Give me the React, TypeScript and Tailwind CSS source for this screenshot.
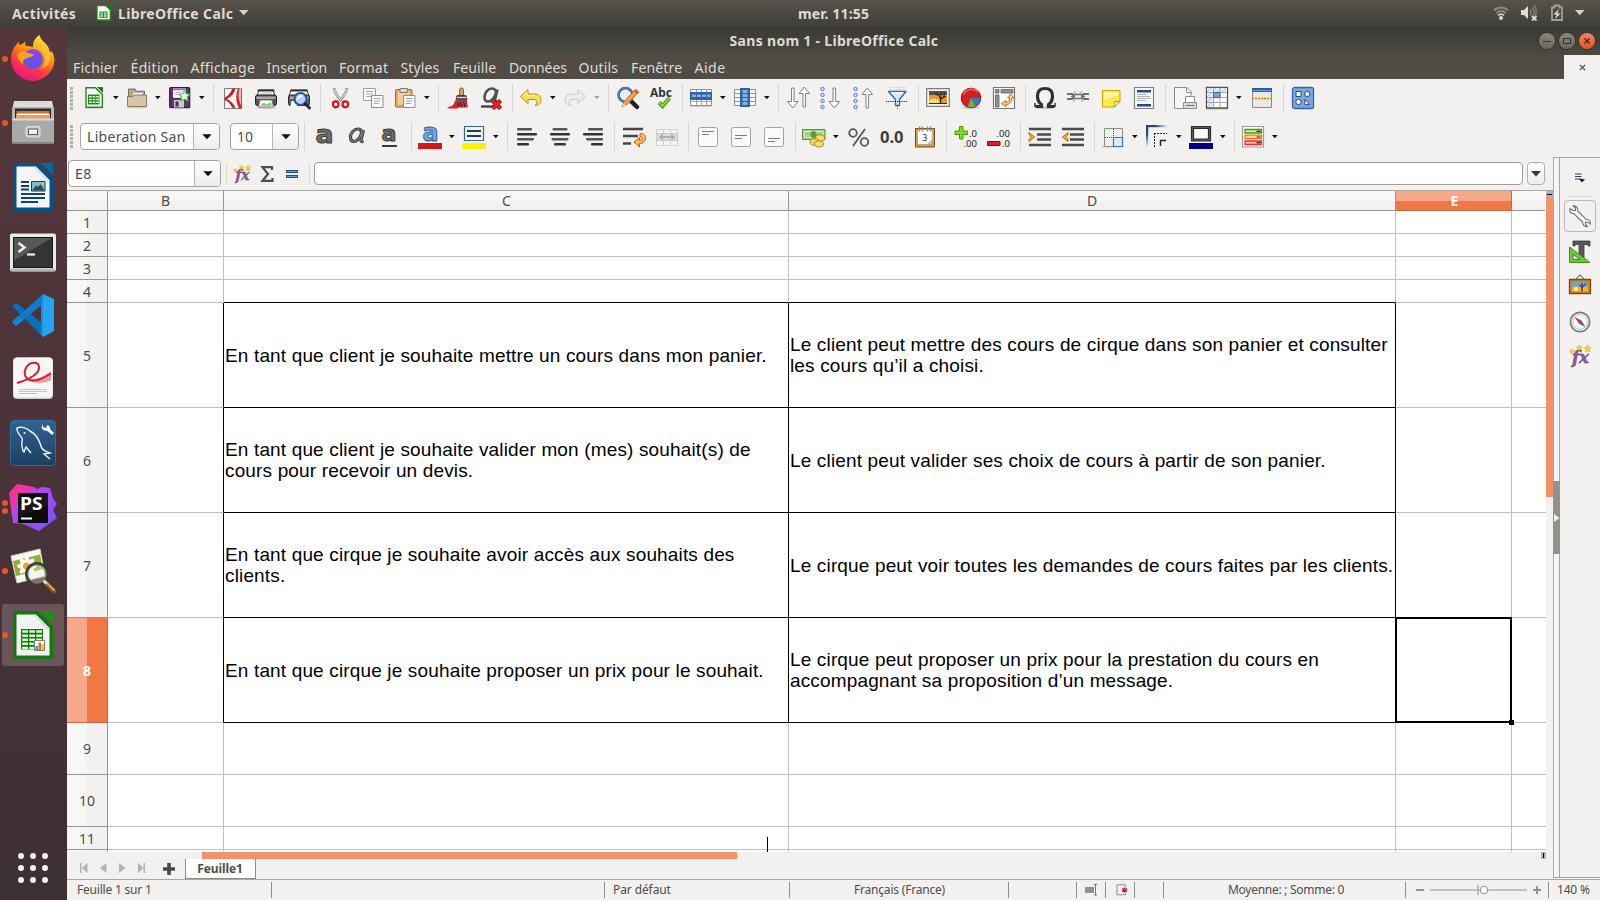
import type { ReactNode } from "react";

/* ---------- shared helpers ---------- */

function Svg({ children, size = 24 }: { children: ReactNode; size?: number }) {
  return (
    <svg width={size} height={size} viewBox={`0 0 ${size} ${size}`} fill="none" className="block shrink-0 overflow-visible">
      {children}
    </svg>
  );
}

function Caret({ color = "#111" }: { color?: string }) {
  return (
    <svg width="6" height="4" viewBox="0 0 6 4" className="block shrink-0">
      <path d="M0 0h5.6L2.8 3.2z" fill={color} />
    </svg>
  );
}

function Tool({ children }: { children: ReactNode }) {
  return <div className="flex w-[33px] shrink-0 pl-1">{children}</div>;
}

function DropTool({ children, faded = false, first = false }: { children: ReactNode; faded?: boolean; first?: boolean }) {
  return (
    <div className={`flex shrink-0 items-center pl-[3px] ${first ? "w-[42px]" : "w-[44px]"}`}>
      {children}
      <div className="pl-[7px]">
        <Caret color={faded ? "#a3a3a1" : "#111"} />
      </div>
    </div>
  );
}

function Sep() {
  return <div className="mr-[3px] ml-1 h-[29px] w-px shrink-0 bg-[#d8d6d3]" />;
}

function Grip() {
  return (
    <div className="ml-[3px] flex w-[3px] flex-col gap-px">
      {[0, 1, 2, 3, 4, 5].map((i) => (
        <div key={i} className="h-[3px] w-[3px] bg-[#b2b0ad]" />
      ))}
    </div>
  );
}

/* ---------- standard toolbar icons ---------- */

const NewDoc = () => (
  <Svg>
    <ellipse cx="12" cy="21.8" rx="9" ry="1.4" fill="#d4d3d1" />
    <path d="M4 1.7h9.5l6.8 6.8V21.3H4z" fill="#fff" stroke="#1b8a1b" strokeWidth="1.4" />
    <path d="M15 1h6v6z" fill="#128012" />
    <path d="M6 8.5h11.5v10H6z" fill="#1b8a1b" />
    <path d="M7 10h2.8v1.5H7zM10.6 10h2.8v1.5h-2.8zM14.2 10H17v1.5h-2.8zM7 12.7h2.8v1.5H7zM10.6 12.7h2.8v1.5h-2.8zM14.2 12.7H17v1.5h-2.8zM7 15.4h2.8v1.7H7zM10.6 15.4h2.8v1.7h-2.8zM14.2 15.4H17v1.7h-2.8z" fill="#d9f5d0" />
  </Svg>
);
const Folder = () => (
  <Svg>
    <ellipse cx="13" cy="21.2" rx="10" ry="1.3" fill="#cfcdca" />
    <path d="M4.5 14V3h6.5l1.5 2.2h8V14z" fill="#b7a583" stroke="#7d6c4c" />
    <path d="M9 6.5h10V14H9z" fill="#fafafa" stroke="#a9a9a9" strokeWidth=".8" />
    <path d="M3.500 20.500v-10H9l1.500-1.500h12v11.500z" fill="#d6c6a6" stroke="#8a7856" />
  </Svg>
);
const Save = () => (
  <Svg>
    <rect x="1.700" y="1.700" width="20" height="20" rx="1" fill="#5c3566" stroke="#361a40" strokeWidth="1.200" />
    <rect x="5" y="2.300" width="13" height="9.500" fill="#fbfbfb" />
    <path d="M5 2.300h13v2H5z" fill="#b65fd0" />
    <path d="M7 6.500h6M7 8.500h4" stroke="#c9a9d2" />
    <rect x="6" y="14" width="10" height="7.500" fill="#c9c9c7" />
    <rect x="7.500" y="15.500" width="3" height="5" fill="#4c2b56" />
    <path d="m16.500 4.500 1.700 3.300 3.600.6-2.600 2.600.6 3.700-3.300-1.700-3.300 1.700.6-3.700-2.600-2.600 3.600-.6z" fill="#eaffe5" stroke="#46c758" strokeWidth="1.100" />
  </Svg>
);
const Pdf = () => (
  <Svg>
    <path d="M3.500 2.500h17v20h-17z" fill="#f4f4f4" stroke="#7d7d7d" />
    <path d="M11.500 3h2.500C13 7.500 9.500 11 5 13c4 1.500 7.500 5 9 8.500h-2.500C9.500 17.500 7 15 4 13.800v-2C7.500 10 10.500 6.500 11.500 3z" fill="#c4161c" stroke="#c4161c" strokeWidth=".6" />
    <path d="M17 2.500h3.500v20h-2.500C14.500 16 14.500 8.500 17 2.500z" fill="#d9262b" />
    <path d="M18.500 2.500H20v17C17 13 17 7 18.500 2.500z" fill="#f6bcbc" />
  </Svg>
);
const Printer = () => (
  <Svg>
    <ellipse cx="12" cy="21.500" rx="10" ry="1.500" fill="#c9c8c5" />
    <path d="M5 4h14l2 6H3z" fill="#f7f7f7" stroke="#333" />
    <path d="M3.500 4.500h17" stroke="#2b2b2b" strokeWidth="1.800" />
    <rect x="1.500" y="9" width="21" height="10.500" rx="2" fill="#555753" stroke="#222" />
    <path d="M2.500 10.500h19v2.500h-19z" fill="#a9aba7" />
    <path d="M6 14h12l1.500 7h-15z" fill="#fff" stroke="#666" strokeWidth=".8" />
    <path d="M7 19c2-3 4-2 5-1s3-1 5-2l.6 3.700H6.500z" fill="#7fc76a" />
    <path d="M6.500 7h11" stroke="#bbb" />
  </Svg>
);
const Preview = () => (
  <Svg>
    <path d="M4 4h16l2 6H2z" fill="#f2f2f2" stroke="#444" />
    <path d="M3.500 4.500h17" stroke="#2b2b2b" strokeWidth="1.800" />
    <rect x="1.500" y="9" width="21" height="10.500" rx="2" fill="#60625e" stroke="#2b2b2b" />
    <path d="M3 10.500h5v2.500H3zM17 10.500h4.500v2.500H17z" fill="#a9aba7" />
    <path d="M4.500 15h5l1 6H3.500z" fill="#fff" />
    <circle cx="13.500" cy="13" r="6" fill="#b9d1ef" stroke="#2b54a8" strokeWidth="2.200" />
    <path d="M10.500 14a3.500 3.500 0 0 1 5-3.500" stroke="#fff" strokeWidth="1.500" />
    <path d="m18 17.500 4.500 4.500" stroke="#1c2b48" strokeWidth="3" strokeLinecap="round" />
  </Svg>
);
const Cut = () => (
  <Svg>
    <path d="M6 2c1 5 3.500 9 7.500 13M19 2c-1 5-3.500 9-7.500 13" stroke="#8b8d89" strokeWidth="2.600" />
    <path d="M6.300 3c1 4.500 3.500 8 6.500 11M18.700 3c-1 4.500-3.500 8-6.500 11" stroke="#f1f1f1" strokeWidth="1" />
    <ellipse cx="7.700" cy="18.300" rx="2.800" ry="3" stroke="#cc1420" strokeWidth="2.200" />
    <ellipse cx="17.300" cy="18.300" rx="2.800" ry="3" stroke="#cc1420" strokeWidth="2.200" />
  </Svg>
);
const Copy = () => (
  <Svg>
    <path d="M2.500 2.500h12v12h-12z" fill="#fbfbfb" stroke="#a0a09e" />
    <path d="M5 5.500h7M5 8h7M5 10.500h5" stroke="#a8a8a6" />
    <path d="M10.500 9.500h11.500v12H10.500z" fill="#fbfbfb" stroke="#8f8f8d" />
    <path d="M13 12.500h6.500M13 15h6.500M13 17.500h5" stroke="#a8a8a6" />
  </Svg>
);
const Paste = () => (
  <Svg>
    <rect x="2.500" y="3.500" width="16.500" height="17.500" rx="1" fill="#dfae62" stroke="#9b6a1c" />
    <path d="M5 5.500h11.500v13H5z" fill="#f0cf97" />
    <path d="M7 2.500h7.500v4H7z" fill="#d8d8d6" stroke="#7c7c7a" />
    <path d="M10.500 9.500h11.500v12H10.500z" fill="#fbfbfb" stroke="#8f8f8d" />
    <path d="M13 12.500h6.500M13 15h6.500M13 17.500h5" stroke="#9d9d9b" />
  </Svg>
);
const Brush = () => (
  <Svg>
    <path d="M13.500 3.500q0-1.500 2-1.500t2 1.500v6.500h-4z" fill="#dba25c" stroke="#8e5d1f" />
    <path d="M11 9.500h9l1 4h-11z" fill="#5d5f5c" stroke="#333" strokeWidth=".8" />
    <path d="M11 11.500h9.500" stroke="#d9d9d9" />
    <path d="M9.500 14h11.500l.8 7.500H6z" fill="#b53a44" />
    <path d="M1 21.500c4-.5 6.500-2.500 8.500-5l3 6H3z" fill="#df1e25" />
    <path d="M14 15.500l2 6M17.500 15l1.500 6M12 16l1 5" stroke="#542027" strokeWidth="1.200" />
  </Svg>
);
const ClearFmt = () => (
  <Svg>
    <path d="M18.500 3.500 16 14M17 7c0-3.500-2-4.500-4-4.500-4 0-7.500 4-7.500 8.500 0 3 1.500 4.500 3.500 4.500 3.500 0 6.500-4 8-8.500M16 14c0 1.500 1 2 2.500 1" stroke="#4f524f" strokeWidth="2.600" />
    <path d="M2 20.500h12" stroke="#444" strokeWidth="2.400" />
    <path d="m13.500 14.500 8 8m0-8-8 8" stroke="#8f0a10" strokeWidth="4.400" />
    <path d="m13.500 14.500 8 8m0-8-8 8" stroke="#f02028" strokeWidth="2.600" />
  </Svg>
);
const Undo = () => (
  <Svg>
    <path d="M1.500 10.500 9 3.500V8h6.500c4.500 0 6.500 2.500 6.500 6s-2.500 5.500-6 5.500c2.500-1.500 2.800-6-1-6H9v4z" fill="#f6df58" stroke="#b99407" strokeLinejoin="round" />
    <path d="M3.500 10.500 8 6.300V9.500h8" stroke="#fff7bb" />
  </Svg>
);
const Redo = () => (
  <Svg>
    <path d="M22.500 10.500 15 3.500V8H8.500C4 8 2 10.500 2 14s2.500 5.500 6 5.500c-2.500-1.500-2.800-6 1-6h6v4z" fill="#ececea" stroke="#c9c9c7" strokeLinejoin="round" />
  </Svg>
);
const Find = () => (
  <Svg>
    <path d="m15 15 6 6" stroke="#222" strokeWidth="4.500" strokeLinecap="round" />
    <circle cx="9.500" cy="9" r="7" fill="#e6eefa" stroke="#2f55a4" strokeWidth="2.600" />
    <circle cx="9.500" cy="9" r="7.200" stroke="#7b9bd6" strokeWidth=".8" />
    <path d="m6 21 2-5.500L19.500 3.500l3 2.800L11 18.500z" fill="#f3a04a" stroke="#b1621a" strokeWidth=".9" />
    <path d="m18 5 1.700-2 3.200 3-1.900 2z" fill="#e34a48" />
    <path d="m6 21 1.200-3.500 2.500 2z" fill="#f7e3c2" />
  </Svg>
);
const Spell = () => (
  <Svg>
    <text x="1" y="10.500" fontFamily="Noto Sans, sans-serif" fontWeight="700" fontSize="11.500" textLength="22" lengthAdjust="spacingAndGlyphs" fill="#33373a">Abc</text>
    <path d="m10 16.500 3.500 3.500L20.500 12" stroke="#3f8f0d" strokeWidth="4" />
    <path d="m10 16.500 3.500 3.500L20.500 12" stroke="#83d943" strokeWidth="2" />
  </Svg>
);
const RowIcon = () => (
  <Svg>
    <path d="M1.500 3.500h21v16h-21z" fill="#fff" stroke="#8f918e" />
    <path d="M2 15.500h20M7.500 4v15M12.500 4v15M17.500 4v15" stroke="#a5a7a4" />
    <rect x="1" y="6" width="22" height="8" fill="#2d63a8" />
    <path d="M3 8.500h4v2.500H3zM8 8.500h4v2.500H8zM13 8.500h4v2.500h-4zM18 8.500h3.500v2.500H18z" fill="#8bb0df" />
    <path d="M1 20.500h22" stroke="#cfcdca" />
  </Svg>
);
const ColIcon = () => (
  <Svg>
    <path d="M1.500 3.500h21v16h-21z" fill="#fff" stroke="#8f918e" />
    <path d="M2 7.500h20M2 11.500h20M2 15.500h20" stroke="#8f918e" />
    <rect x="7" y="2" width="10" height="19" fill="#2d63a8" />
    <path d="M9.500 4h5v3h-5zM9.500 8h5v3h-5zM9.500 12h5v3h-5zM9.500 16h5v3h-5z" fill="#8bb0df" />
  </Svg>
);
const downArrow = "M0 0h2.600v13.500h4L1.300 20l-5.300-6.500h4z";
const upArrow = "M0 20h2.600V6.500h4L1.300 0l-5.300 6.500h4z";
const Sort = () => (
  <Svg>
    <path d={downArrow} transform="translate(5.500 2)" fill="#fafafa" stroke="#80827f" />
    <path d={upArrow} transform="translate(17 1)" fill="#fafafa" stroke="#80827f" />
  </Svg>
);
const Dots = () => (
  <>
    {[3, 9, 15, 21].map((y) => (
      <circle key={y} cx="3.500" cy={y} r="1.700" fill="#dbe7f7" stroke="#4a7bbd" />
    ))}
  </>
);
const SortAsc = () => (
  <Svg>
    <Dots />
    <path d={downArrow} transform="translate(14 2)" fill="#fafafa" stroke="#80827f" />
  </Svg>
);
const SortDesc = () => (
  <Svg>
    <Dots />
    <path d={upArrow} transform="translate(14 2)" fill="#fafafa" stroke="#80827f" />
  </Svg>
);
const Filter = () => (
  <Svg>
    <path d="M5 1.500h15M5 3.500h15" stroke="#c9c8c6" strokeDasharray="1 1" />
    <path d="M3.500 5.500h17.500l-6.500 8v6h-4v-6z" fill="#d7e6f8" stroke="#3268ad" strokeWidth="1.300" strokeLinejoin="round" />
    <path d="M6 6.800h12" stroke="#fff" strokeWidth="1.500" />
    <path d="M1 15.500h22" stroke="#222" strokeDasharray="1.200 1" />
    <path d="M12.500 20v3" stroke="#3268ad" strokeDasharray="1 1" />
  </Svg>
);
const Picture = () => (
  <Svg>
    <path d="M.7 2.700h22.600v17.600H.7z" fill="#f6f6f4" stroke="#7c7e7a" strokeWidth="1.200" />
    <path d="M3 5h18v13H3z" fill="#57504a" />
    <path d="M3 9h18v9H3z" fill="#e79a28" />
    <ellipse cx="8" cy="15.500" rx="5" ry="2.800" fill="#fbe07b" />
    <path d="M14.500 17.500c.8-3 .6-5-2-8.500m2.800 4c2-1 3-3 3.200-6M15 13c-.3-3 0-5 .5-6.500m-6 1 3 2m5.300 1.500 2.200-.5" stroke="#2a1d10" strokeWidth="1.100" />
    <path d="M3 17h18v1H3z" fill="#33240f" />
  </Svg>
);
const Pie = () => (
  <Svg>
    <ellipse cx="12" cy="21.500" rx="9" ry="1.500" fill="#cbcac7" />
    <circle cx="12" cy="12" r="9.800" fill="#d61f26" stroke="#a80f15" />
    <path d="M12 12h9.500a9.500 9.500 0 0 1-5 8z" fill="#3e74bd" />
    <path d="m12 12 4.500 8.300a9.500 9.500 0 0 1-7.800.5z" fill="#63bb3c" />
    <path d="M4.500 8.500A9 9 0 0 1 19 6" stroke="#f0656a" strokeWidth="1.500" />
  </Svg>
);
const Pivot = () => (
  <Svg>
    <path d="M1.500 1.500h21v21h-21z" fill="#fff" stroke="#777975" strokeWidth="1.200" />
    <path d="M3.500 3.500H7V7H3.500zM9 3.500h12V7H9zM3.500 9H7v12H3.500z" fill="#8f918d" stroke="#5f615d" strokeWidth=".8" />
    <path d="m18.700 8 3 4h-2c.2 4-1.700 6.300-5.700 6.500v2.300L9.500 17.500l4.500-3v2c2.500 0 3.700-1.500 3.700-4.500h-2z" fill="#fbd9a9" stroke="#d2680a" strokeLinejoin="round" />
  </Svg>
);
const Omega = () => (
  <Svg>
    <ellipse cx="12" cy="21.800" rx="10" ry="1.400" fill="#c7c6c3" />
    <path d="M2.500 20.500h6v-2C5.500 16.500 4.500 13 4.500 10c0-5 3-7.500 7.500-7.500s7.500 2.500 7.500 7.500c0 3-1 6.500-4 8.500v2h6" stroke="#2c3133" strokeWidth="3.200" />
    <path d="M2 21v-4M22 21v-4" stroke="#2c3133" strokeWidth="1.500" />
  </Svg>
);
const Link = () => (
  <Svg>
    <path d="M1 8h5c2 0 2 5 0 5H1M23 8h-5c-2 0-2 5 0 5h5" stroke="#6d6f6b" strokeWidth="1.800" />
    <path d="M9 8.500h6c2 0 2 4 0 4H9c-2 0-2-4 0-4zM5 10.500h4M15 10.500h4" stroke="#6d6f6b" strokeWidth="1.400" />
    <path d="m8 5.500 2.500 2M16 5.500l-2.500 2M7 16l2-2M17 16l-2-2" stroke="#8b8d89" />
  </Svg>
);
const Note = () => (
  <Svg>
    <path d="M3.500 4.500h17.500v11l-5.500 5.500h-12z" fill="#fbe94e" stroke="#c9a400" />
    <path d="M5 6h14.500v3L5 14z" fill="#fdf59b" />
    <path d="M21 15.500h-5.500V21z" fill="#fff6ae" stroke="#c9a400" strokeLinejoin="round" />
  </Svg>
);
const HeaderFooter = () => (
  <Svg>
    <path d="M2.500 1.500h19v21h-19z" fill="#fbfbfb" stroke="#7f817e" strokeWidth="1.200" />
    <path d="M5 4h14v2.500H5zM5 18h14v2.500H5z" fill="#204a87" />
    <path d="M5 8.500h9M5 10.500h13M5 12.500h14M5 14.500h9" stroke="#b0b0ae" />
  </Svg>
);
const PrintArea = () => (
  <Svg>
    <path d="M1.500 1.500H14l4 4v17H1.500z" fill="#f6f6f5" stroke="#8c8e8a" />
    <path d="M13.500 1.500v5h5" stroke="#8c8e8a" />
    <path d="M12.500 10.500h9v6h-9z" fill="#fff" stroke="#8c8e8a" />
    <path d="M10.500 16.500h13v6h-13z" fill="#d9d9d7" stroke="#8c8e8a" />
    <path d="M13 19.500h8" stroke="#777" />
  </Svg>
);
const Freeze = () => (
  <Svg>
    <path d="M1 22.800h22" stroke="#bdbcb9" strokeWidth="1.500" />
    <path d="M1.500 1.500h21v20.500h-21z" fill="#fff" stroke="#555753" strokeWidth="1.300" />
    <path d="M2 2h20v4H2zM2 6h6v15H2z" fill="#e4edf8" />
    <path d="m2 6 4-4m1 4 4-4m1 4 4-4m1 4 4-4M2 11l5-5M2 16l5-5M2 21l5-5" stroke="#9fb9da" strokeWidth=".9" />
    <path d="M2 6.500h20M8.500 2v19M15 2v19M2 11.500h20M2 16.500h20" stroke="#a9aba7" />
    <path d="M8.500 6.500h6.500v5H8.500z" fill="#7ba4d9" stroke="#38689f" />
  </Svg>
);
const Split = () => (
  <Svg>
    <path d="M2.500 5.500h19v16h-19z" fill="#e8e8e5" stroke="#888a86" />
    <path d="M2 2h20v4H2z" fill="#2b5ea6" />
    <path d="M3 4.500h18" stroke="#6f9ad4" />
    <path d="M2 12.500h20" stroke="#f57900" strokeWidth="1.500" strokeDasharray="2 1" />
  </Svg>
);
const Shapes = () => (
  <Svg>
    <rect x="1.500" y="1.500" width="21" height="21" rx="2" fill="#7fa7db" stroke="#3465a4" strokeWidth="1.300" />
    <path d="M5 5.500h5v5H5zM13.700 13.500v5.200h5.200z" fill="#fff" stroke="#204a87" />
    <circle cx="16.300" cy="8" r="2.700" fill="#dce9f8" stroke="#204a87" />
    <circle cx="7.500" cy="16" r="2.700" fill="#fff" stroke="#204a87" />
  </Svg>
);

/* ---------- formatting toolbar icons ---------- */

const Letter = ({ italic = false, underline = false }: { italic?: boolean; underline?: boolean }) => (
  <Svg>
    {italic ? (
      <>
        <path d="M18.500 5 16 15M16.500 8c0-3-1.500-4-3.500-4-4 0-7.500 4-7.500 8 0 3 1.200 4.500 3.200 4.500 3.300 0 6.300-4 7.800-8M16 15c0 1.500 1 2 2.500 1" stroke="#3c3e3b" strokeWidth="3.200" />
        <path d="M18.500 5 16 15M16.500 8c0-3-1.500-4-3.500-4-4 0-7.500 4-7.500 8 0 3 1.200 4.500 3.200 4.500 3.300 0 6.300-4 7.800-8M16 15c0 1.500 1 2 2.500 1" stroke="#7f827e" strokeWidth="1.200" />
      </>
    ) : (
      <text x={3.500} y={underline ? 16 : 18} fontFamily="DejaVu Sans, sans-serif" fontWeight="700" fontSize={underline ? 22 : 25} textLength={underline ? 15 : 18} lengthAdjust="spacingAndGlyphs" fill="#6c6e6a" stroke="#3c3e3b" strokeWidth="1">
        a
      </text>
    )}
    {underline && <path d="M4 21h15" stroke="#3c3e3b" strokeWidth="2" />}
  </Svg>
);
const FontColor = () => (
  <Svg>
    <text x="4.500" y="15.500" fontFamily="DejaVu Sans, sans-serif" fontWeight="700" fontSize="24" textLength="16" lengthAdjust="spacingAndGlyphs" fill="#7fa6dc" stroke="#2b5ea6" strokeWidth="1">
      a
    </text>
    <path d="M0 18h24v6H0z" fill="#cc1a1f" />
  </Svg>
);
const Highlight = () => (
  <Svg>
    <path d="M2.500 1.500h19v14h-19z" fill="#eef4fb" stroke="#3465a4" strokeWidth="1.200" />
    <path d="M5 6h14M5 11h14" stroke="#34383a" strokeWidth="2" />
    <path d="M0 18h24v6H0z" fill="#fff200" />
  </Svg>
);
const Align = ({ mode }: { mode: "l" | "c" | "r" }) => {
  const widths = [15, 20, 17, 12];
  return (
    <Svg>
      {widths.map((w, i) => {
        const x = mode === "l" ? 2 : mode === "c" ? 12 - w / 2 : 22 - w;
        return <rect key={i} x={x} y={3 + i * 5} width={w} height="2.600" rx="1" fill={i % 2 ? "#2f3331" : "#555753"} />;
      })}
    </Svg>
  );
};
const Wrap = () => (
  <Svg>
    <path d="M1 4h20M1 11h15M1 18.500h8" stroke="#444745" strokeWidth="2.400" />
    <path d="M18 8.500c5 0 6.500 3 5 6.500-1 2.500-3 3.500-5.500 3.500V22L12 17l5.500-4.500v3c3 0 4-3.500.5-4z" fill="#f9b767" stroke="#ce5c00" strokeLinejoin="round" />
  </Svg>
);
const Merge = () => (
  <Svg>
    <path d="M1.500 4.500h21v16h-21z" fill="#f5f5f4" stroke="#d2d1cf" />
    <path d="M8.500 4v17M15.500 4v17" stroke="#d2d1cf" />
    <path d="M1.500 8.500h21v7h-21z" fill="#dcdcda" stroke="#c9c8c6" />
    <path d="M5 12h14M8 9.500 5 12l3 2.500M16 9.500l3 2.500-3 2.500" stroke="#a7a7a5" strokeWidth="1.300" />
  </Svg>
);
const VAlign = ({ y }: { y: number }) => (
  <Svg>
    <rect x="2.500" y="2.500" width="19" height="19" rx="2" fill="#fafafa" stroke="#a3a4a1" />
    <path d={`M6 ${y}h12M6 ${y + 3}h7`} stroke="#7b7d79" />
  </Svg>
);
const Currency = () => (
  <Svg>
    <path d="M.5 4.500h22.500v10H.5z" fill="#a3cf86" stroke="#5c8d41" />
    <path d="M2.500 6.500h18.500v6H2.500z" stroke="#d9efc9" />
    <ellipse cx="11.500" cy="9.500" rx="3" ry="3.500" fill="#5f9b45" />
    <ellipse cx="18" cy="13" rx="4.500" ry="3.300" fill="#f2dd75" stroke="#a98a1a" />
    <ellipse cx="12.500" cy="17" rx="4.500" ry="3.300" fill="#efd464" stroke="#a98a1a" />
    <ellipse cx="17" cy="19" rx="4.500" ry="3" fill="#f2dd75" stroke="#a98a1a" />
  </Svg>
);
const Percent = () => (
  <Svg>
    <circle cx="6" cy="8" r="3.800" stroke="#54575a" strokeWidth="1.800" />
    <circle cx="17.500" cy="17" r="3.800" stroke="#54575a" strokeWidth="1.800" />
    <path d="M18 4 6 21" stroke="#54575a" strokeWidth="1.800" />
  </Svg>
);
const NumberIcon = () => (
  <Svg>
    <text x="0" y="17.500" fontFamily="Noto Sans, sans-serif" fontWeight="700" fontSize="15.500" textLength="23.500" lengthAdjust="spacingAndGlyphs" fill="#3a3e3c">0.0</text>
  </Svg>
);
const DateIcon = () => (
  <Svg>
    <path d="M2.500 3.500h19v18.500h-19z" fill="#d19a3a" stroke="#7d4f05" />
    <path d="M4.500 4.500h15v15h-15z" fill="#fafafa" stroke="#9c9c9a" strokeWidth=".7" />
    <path d="M6.500 1.500v5M9.500 1.500v5M14.500 1.500v5M17.500 1.500v5" stroke="#8a8c88" strokeWidth="1.400" />
    <text x="9" y="16" fontFamily="DejaVu Sans, sans-serif" fontSize="8.500" fill="#333">3</text>
    <path d="m15 19 4-4v4z" fill="#d5d5d3" stroke="#999" strokeWidth=".6" />
  </Svg>
);
const AddDec = () => (
  <Svg>
    <path d="M5.500 1.500h3.500V6h4.500v3.500H9V14H5.500V9.500H1V6h4.500z" fill="#7bdc1e" stroke="#4e9a06" strokeLinejoin="round" />
    <text x="15" y="12" fontFamily="Noto Sans, sans-serif" fontSize="9.500" fill="#222">.0</text>
    <text x="9.500" y="22" fontFamily="Noto Sans, sans-serif" fontSize="9.500" fill="#222">.00</text>
  </Svg>
);
const DelDec = () => (
  <Svg>
    <path d="M.5 16.500h12.500v4H.5z" fill="#e01b24" stroke="#a40000" strokeLinejoin="round" />
    <text x="9.500" y="12" fontFamily="Noto Sans, sans-serif" fontSize="9.500" fill="#222">.00</text>
    <text x="15" y="22" fontFamily="Noto Sans, sans-serif" fontSize="9.500" fill="#222">.0</text>
  </Svg>
);
const Indent = ({ back = false }: { back?: boolean }) => (
  <Svg>
    <path d="M1 4h22M9 9.500h14M9 14.500h14M1 20h22" stroke="#484b49" strokeWidth="2.400" />
    <path d={back ? "M7 7.500v2L4.500 12 7 14.500v2L1.500 12z" : "M1 7.500v2L3.500 12 1 14.500v2L6.500 12z"} fill="#fcaf3e" stroke="#ce5c00" />
  </Svg>
);
const Borders = () => (
  <Svg>
    <path d="M1 21.500h22" stroke="#c5c4c1" strokeWidth="1.800" />
    <path d="M3.500 3.500h18v18h-18z" fill="#eceeeb" stroke="#8c8e8a" />
    <path d="M12.500 4v8M4 12.500h8" stroke="#555" strokeDasharray="1 1" />
    <path d="M12.500 12.500h9v9h-9z" fill="#e1ecf8" stroke="#3e74b5" strokeWidth="1.200" />
  </Svg>
);
const BorderStyle = () => (
  <Svg>
    <defs>
      <linearGradient id="bsx" x1="0" y1="0" x2="1" y2="0"><stop offset=".4" stopColor="#27486f" /><stop offset="1" stopColor="#27486f" stopOpacity="0" /></linearGradient>
      <linearGradient id="bsy" x1="0" y1="0" x2="0" y2="1"><stop offset=".4" stopColor="#27486f" /><stop offset="1" stopColor="#27486f" stopOpacity="0" /></linearGradient>
    </defs>
    <path d="M1 0h22v2.200H1z" fill="url(#bsx)" />
    <path d="M1 0h2.200v22H1z" fill="url(#bsy)" />
    <path d="M9 8.500h13M9.500 8v14" stroke="#222" strokeDasharray="2 1" />
    <path d="M15 15.500h6M15.500 15v6" stroke="#222" strokeWidth="1.400" />
  </Svg>
);
const BorderColor = () => (
  <Svg>
    <path d="M3.500 2.500h17v12.500h-17z" fill="#fafafa" stroke="#2b2e2f" strokeWidth="3.200" />
    <path d="M3.500 2.500h17v12.500h-17z" stroke="#686b69" strokeWidth=".8" />
    <path d="M0 18h24v6H0z" fill="#000080" />
  </Svg>
);
const CondFmt = () => (
  <Svg>
    <path d="M1.500 1.500h21v20.500h-21z" fill="#fdfdfd" stroke="#9b9c99" strokeWidth="1.200" />
    <path d="M4 4.500h16.500v3.500H4z" fill="#cbeeb4" stroke="#4e9a06" strokeWidth="1.300" />
    <path d="M4 10.200h16.500v3.500H4z" fill="#fcdcab" stroke="#f57900" strokeWidth="1.300" />
    <path d="M4 16h16.500v3.500H4z" fill="#f9b9b9" stroke="#ef2929" strokeWidth="1.300" />
    <path d="M15.500 6.300h4M15.500 12h4M15.500 17.700h4" stroke="#222" strokeWidth="1.200" />
  </Svg>
);
const FxIcon = ({ size = 18 }: { size?: number }) => (
  <svg width={size} height={size} viewBox="0 0 22 22" fill="none" className="block shrink-0 overflow-visible">
    <text x="3" y="18" fontFamily="DejaVu Serif, serif" fontStyle="italic" fontWeight="700" fontSize="17" textLength="17" lengthAdjust="spacingAndGlyphs" fill="#8e5a97" stroke="#5c3566" strokeWidth=".4">fx</text>
    <path d="m18.500 0 1.200 2.300 2.300.5-1.700 1.700.4 2.500-2.200-1.200L16.300 7l.4-2.500L15 2.800l2.300-.5zM10.500 0l1 1.800 2 .3-1.500 1.400.4 2-1.900-1-1.900 1 .4-2L7.500 2.100l2-.3zM3 4l.8 1.500 1.700.2-1.200 1.200.3 1.700L3 7.800l-1.600.8.300-1.700L.5 5.700l1.700-.2z" fill="#f6d32d" stroke="#c4a000" strokeWidth=".4" />
  </svg>
);

/* ---------- dock icons ---------- */

const Firefox = () => (
  <Svg size={48}>
    <defs>
      <linearGradient id="ff1" x1=".8" y1="0" x2=".3" y2="1"><stop offset="0" stopColor="#fff44f" /><stop offset=".4" stopColor="#ff980e" /><stop offset=".7" stopColor="#ff3647" /><stop offset="1" stopColor="#e31587" /></linearGradient>
      <linearGradient id="ff2" x1=".7" y1="0" x2=".3" y2="1"><stop offset="0" stopColor="#9a3df0" /><stop offset="1" stopColor="#4a5be8" /></linearGradient>
    </defs>
    <path d="M2 24C2 18 4 13 8 9l1.500-2.500c.3 1.500.5 2.500 1.500 3.500 2-1 3-1.500 5.500-3.500-.5 2-.3 3 .5 4.500 3 0 5 .5 7 1-.5-5 2.500-9.500 6.500-12 1 4 3.500 6 6.500 9 3 3 3.500 6 4 8.500l1.500-1.500c2 3 3 6.500 3 9.500a22.500 22 0 0 1-22.500 20.500A22 22 0 0 1 2 24z" fill="url(#ff1)" />
    <circle cx="24" cy="24" r="10" fill="url(#ff2)" />
    <path d="M8 20c2-3 6-3.500 9-2.500 3 .5 5 1.500 8 2-1.500 2.500-5 3-7 3.500-3 1-5 3-4 6-3-1-5-5-6-9z" fill="#ffa41c" />
    <path d="M24 13c5-1 10 1.500 12 7 1 6-1 11-5 14 8-2 11-8 10-15-1-6-7-8-17-6z" fill="#ffca2e" opacity=".8" />
  </Svg>
);
const Files = () => (
  <Svg size={48}>
    <path d="M5 2h38l2 10H3z" fill="#dcdcda" />
    <path d="M3 8h42v14H3z" fill="#b7b7b5" />
    <path d="M6 9.500h36V22H6z" fill="#2d2d2b" />
    <path d="M7.500 12h33v6h-33z" fill="#e0682a" />
    <path d="M7 15h34v7H7z" fill="#f0a050" />
    <path d="M8 14.500h32v1.500H8z" fill="#fff" />
    <path d="M3 19.500h42V45H3z" fill="#a9a9a7" />
    <path d="M3 19.500h42v2H3z" fill="#d8d8d6" />
    <path d="M3 43h42v2H3z" fill="#858583" />
    <rect x="17" y="27.500" width="14" height="10.500" rx="2" fill="#c9c9c7" stroke="#e2e2e0" />
    <rect x="19.500" y="30" width="9" height="5.500" fill="#f4f4f2" stroke="#5b5b59" />
  </Svg>
);
const Writer = () => (
  <Svg size={48}>
    <path d="M6 0h23l15 15v31q0 2-2 2H6q-2 0-2-2V2q0-2 2-2z" fill="#04528b" />
    <path d="M32 0h12v12z" fill="#0369a3" />
    <path d="M7.500 3.500H27L40.500 17v27.500h-33z" fill="#f5f5f5" />
    <path d="m25.500 3.500 15 15-1 1-15.500-16z" fill="#cfd8de" />
    <path d="M12 19h8M12 23h8M12 26.500h8M12 31h24M12 35h24M12 39h17" stroke="#06466f" strokeWidth="2" />
    <path d="M22.500 18.500H36v9.500H22.500z" fill="#7db9e0" stroke="#06466f" />
    <path d="m23 27.500 4-5 2 1.500 2.500-3 4 6.500z" fill="#39474c" /><circle cx="33.800" cy="20.500" r="1.300" fill="#f4d03c" />
  </Svg>
);
const Terminal = () => (
  <Svg size={48}>
    <rect x="1" y="6.500" width="46" height="38" rx="2" fill="#e9e9e7" />
    <path d="M2 41.500h44V44H2z" fill="#b5b5b3" />
    <rect x="4.500" y="10.500" width="39" height="30" fill="#333532" stroke="#181818" />
    <path d="M5 11h38L5 33.500z" fill="#555854" />
    <path d="m9.500 16 6 4.500-6 4.500" stroke="#eee" strokeWidth="2.500" />
    <path d="M18 27.500h8" stroke="#eee" strokeWidth="2.200" />
  </Svg>
);
const VsCode = () => (
  <Svg size={48}>
    <path d="m3 15 4-3.500 26 20.500v13z" fill="#0a6fb8" />
    <path d="m3 31 4 4L34 13V3z" fill="#0d7cc9" />
    <path d="m3 31 4 4 7-5.500-5-4.500z" fill="#0f86d8" />
    <path d="M34 3 45 8v32l-11 6-1-1z" fill="#24a5f2" />
    <path d="M34 3v42l-2-1V13z" fill="#1a8fe0" />
  </Svg>
);
const Evince = () => (
  <Svg size={48}>
    <rect x="4" y="2.500" width="40" height="41.500" rx="4" fill="#d0d0ce" />
    <rect x="4.500" y="2.500" width="39" height="40" rx="4" fill="#f6f6f5" />
    <path d="M23 24c7 0 12-3 19-8v9c-8 4-16 4-23 0z" fill="#ef9a9a" />
    <path d="M8 28c10-3 22-8 22-15.500 0-6.500-9-6-12.500-.5-4 7-1 13 6 13.500 6 .5 12-3 18.500-7" stroke="#cf2030" strokeWidth="2" />
    <path d="M10 34.500h28M10 36.500h28M10 38.500h18" stroke="#c2c2c0" />
  </Svg>
);
const MySql = () => (
  <Svg size={48}>
    <defs><linearGradient id="my" x1="0" y1="0" x2="0" y2="1"><stop offset="0" stopColor="#2f6496" /><stop offset="1" stopColor="#1c3f5e" /></linearGradient></defs>
    <rect x="1.500" y="1.500" width="45" height="45" rx="4" fill="url(#my)" stroke="#2d6ca4" />
    <path d="M13 28c1.500 2 0 5 2 5l2-5c2 2 3 4 5 6M13 28c-1-4 1-6 0-9-3-4-6-7-5-10 4-2 10 0 13 3 6 3 9 8 11 15 1 5 5 5 9 7l-6 1 6 5" stroke="#f0f4f8" strokeWidth="1.400" />
    <circle cx="15.500" cy="14" r="1" fill="#f0f4f8" />
    <path d="M34 5v3l3 1 1.500-3q3 1 2.500 4l4 4-2 2-4.500-4q-5 0-6-4z" fill="#f2f6fa" />
  </Svg>
);
const PhpStorm = () => (
  <Svg size={48}>
    <defs><linearGradient id="ps" x1="0" y1="0" x2="1" y2="1"><stop offset="0" stopColor="#ff318c" /><stop offset=".4" stopColor="#b345f1" /><stop offset="1" stopColor="#6b57ff" /></linearGradient></defs>
    <path d="m0 10 8-9 17 3 3 2 5-2 8 1 3 10 4 6-4 6 4 8-18 13-16-7-10-1-2-14z" fill="url(#ps)" />
    <path d="m0 10 8-9 17 3-7 7H9L5 28z" fill="#ff318c" opacity=".55" />
    <rect x="9" y="10" width="30" height="30" fill="#0b0b0b" />
    <path d="M9 22 39 10v12L9 34z" fill="#222" opacity=".6" />
    <text x="11" y="27" fontFamily="Noto Sans, sans-serif" fontWeight="700" fontSize="18" textLength="22.500" lengthAdjust="spacingAndGlyphs" fill="#fff">PS</text>
    <path d="M12 35.500h11" stroke="#fff" strokeWidth="2" />
  </Svg>
);
const Viewer = () => (
  <Svg size={48}>
    <path d="m2 9 29-7 5 27L8 36z" fill="#f7f7f3" stroke="#cfcfca" />
    <path d="m4 14 27-6.500L34 22 7 29z" fill="#93ad3b" />
    {[0, 45, 90, 135].map((a) => (
      <ellipse key={a} cx="18" cy="19" rx="10" ry="3.200" transform={`rotate(${a} 18 19)`} fill="#fff" />
    ))}
    <circle cx="17.500" cy="19" r="3.500" fill="#f2a81d" />
    <circle cx="28" cy="27" r="10.500" fill="#f1efd6" fillOpacity=".35" stroke="#3b3c3a" strokeWidth="3" />
    <circle cx="28" cy="27" r="9.200" stroke="#84867f" />
    <path d="m37 36 8 8" stroke="#8a5d1f" strokeWidth="4.500" strokeLinecap="round" />
    <path d="m38 36 7 7" stroke="#dba24b" strokeWidth="2" strokeLinecap="round" />
    <path d="m34.500 33.500 3 3" stroke="#ddd" strokeWidth="3" />
  </Svg>
);
const CalcDock = () => (
  <Svg size={48}>
    <path d="M6 0h23l15 15v31q0 2-2 2H6q-2 0-2-2V2q0-2 2-2z" fill="#107a0c" />
    <path d="M32 0h12v12z" fill="#12950f" />
    <path d="M7.500 3.500H27L40.500 17v27.500h-33z" fill="#f2f2f2" />
    <path d="m25.500 3.500 15 15-1 1-15.500-16z" fill="#cddccb" />
    <path d="M12 18h22v20.500H12z" fill="#0f7d0c" />
    {[19.300, 23.400, 27.500, 31.600, 35.700].map((y) => (
      <path key={y} d={`M13.200 ${y}h5.800v2.500h-5.800zM20.200 ${y}h5.800v2.500h-5.800zM27.200 ${y}h5.800v2.500h-5.800z`} fill="#d6f7ce" />
    ))}
    <path d="M25.500 29.500h10v10h-10z" fill="#fff" stroke="#7b7b79" />
    <path d="M26.500 35h2.500v4h-2.500z" fill="#2f96d8" /><path d="M29.500 31.500H32V39h-2.500z" fill="#e46b28" /><path d="M32.500 33.500H35V39h-2.500z" fill="#efc02e" />
  </Svg>
);

const dock: { icon: ReactNode; dots: number; active?: boolean }[] = [
  { icon: <Firefox />, dots: 1 },
  { icon: <Files />, dots: 1 },
  { icon: <Writer />, dots: 0 },
  { icon: <Terminal />, dots: 0 },
  { icon: <VsCode />, dots: 0 },
  { icon: <Evince />, dots: 0 },
  { icon: <MySql />, dots: 0 },
  { icon: <PhpStorm />, dots: 2 },
  { icon: <Viewer />, dots: 1 },
  { icon: <CalcDock />, dots: 1, active: true },
];

function Dock() {
  return (
    <div className="flex w-[67px] shrink-0 flex-col bg-linear-to-b from-[#54373b] via-[#4a3339] to-[#3d3033] pt-px">
      {dock.map((d, i) => (
        <div key={i} className={`mb-[2px] ml-[2px] flex h-[62px] w-[62px] shrink-0 items-center rounded-[3px] ${d.active ? "bg-[#6a5559]" : ""}`}>
          <div className="flex w-[6px] flex-col items-center gap-[2px]">
            {Array.from({ length: d.dots }, (_, k) => (
              <div key={k} className="h-[6px] w-[6px] rounded-full bg-[#e95420]" />
            ))}
          </div>
          <div className="pl-px">{d.icon}</div>
        </div>
      ))}
      <div className="mt-auto mb-[17px] ml-[18px] grid w-[30px] grid-cols-3 gap-[6px]">
        {Array.from({ length: 9 }, (_, k) => (
          <div key={k} className="h-[6px] w-[6px] rounded-full bg-[#f2f0f0]" />
        ))}
      </div>
    </div>
  );
}

/* ---------- top bars ---------- */

function TopBar() {
  return (
    <div className="flex h-[27px] shrink-0 items-center bg-linear-to-b from-[#57534c] to-[#3f3e3a] pb-px text-[14px] font-bold text-[#dfdbd2]">
      <div className="w-[84px] pl-3 tracking-[0.38px]">Activités</div>
      <div className="w-[21px] pl-[12px]">
        <svg width="16" height="16" viewBox="0 0 16 16" className="block">
          <path d="M1 .7h9l4.300 4.300v10H1z" fill="#fff" stroke="#1b8a1b" strokeWidth="1.300" />
          <path d="M10.500 0H15v4.500z" fill="#128012" />
          <path d="M3.500 6.500h8v6.500h-8z" fill="#1b8a1b" />
          <path d="M4.500 7.500h2.500v1.200H4.500zM8 7.500h2.500v1.200H8zM4.500 9.500h2.500v1.200H4.500zM8 9.500h2.500v1.200H8zM4.500 11.300h2.500v1H4.500zM8 11.300h2.500v1H8z" fill="#d9f5d0" />
        </svg>
      </div>
      <div className="w-[134px] pl-[13px] tracking-[0.38px] whitespace-nowrap">LibreOffice Calc</div>
      <svg width="10" height="6" viewBox="0 0 10 6" className="block"><path d="M0 0h9.500L4.700 5.200z" fill="#d6d2ca" /></svg>
      <div className="ml-[549px] w-[695px] tracking-[0.15px]">mer. 11:55</div>
      <div className="flex items-center">
        <svg width="16" height="16" viewBox="0 0 16 16" fill="none" className="block">
          <path d="M1 5.500c4-4 10-4 14 0M3.300 8c3-2.500 6.500-2.500 9.500 0" stroke="#8b8882" strokeWidth="1.800" />
          <path d="M5 10.300c2-1.400 4-1.400 6 0" stroke="#dfdbd2" strokeWidth="1.600" />
          <circle cx="8" cy="13" r="2" fill="#dfdbd2" />
        </svg>
        <svg width="18" height="18" viewBox="0 0 18 18" fill="none" className="ml-[11px] block">
          <path d="M1 6h3l4-4v13l-4-4H1z" fill="#dfdbd2" />
          <path d="M10 5.500c1.500 2 1.500 4 0 6M12 3.500c2.500 3 2.500 7 0 10M14 1.500c2.500 3 2.500 7 1.500 10" stroke="#85827c" strokeWidth="1.400" />
          <path d="m12 12 4.500 4.500m0-4.500L12 16.500" stroke="#dfdbd2" strokeWidth="1.800" />
        </svg>
        <svg width="14" height="18" viewBox="0 0 14 18" fill="none" className="ml-[12px] block">
          <path d="M2 3.500h2.500v-2h5v2H12V16H2z" stroke="#a39f98" strokeWidth="1.800" />
          <path d="m9 5-5.500 5.500h3L5 15l5.500-5.500h-3z" fill="#dfdbd2" />
        </svg>
        <svg width="10" height="6" viewBox="0 0 10 6" className="ml-[11px] block"><path d="M0 0h9.500L4.700 5.200z" fill="#d6d2ca" /></svg>
      </div>
    </div>
  );
}

function TitleBar() {
  return (
    <div className="flex h-[28px] shrink-0 items-center justify-between bg-linear-to-b from-[#3a3935] to-[#4c4943] pr-[5px]">
      <div className="w-[62px]" />
      <div className="w-[1404px] pb-[2px] text-center text-[14px] font-bold tracking-[0.3px] text-[#dfdbd2]">Sans nom 1 - LibreOffice Calc</div>
      <div className="flex gap-1">
        <div className="flex h-4 w-4 items-center justify-center rounded-full bg-linear-to-b from-[#8a877f] to-[#68655e] ring-1 ring-[#35342f]">
          <div className="h-px w-2 bg-[#33322e]" />
        </div>
        <div className="flex h-4 w-4 items-center justify-center rounded-full bg-linear-to-b from-[#8a877f] to-[#68655e] ring-1 ring-[#35342f]">
          <div className="h-[6px] w-2 border border-[#33322e]" />
        </div>
        <div className="flex h-4 w-4 items-center justify-center rounded-full bg-linear-to-b from-[#f6825f] to-[#e05220] ring-1 ring-[#35342f]">
          <svg width="6" height="6" viewBox="0 0 6 6"><path d="m.5.5 5 5m0-5-5 5" stroke="#40231a" strokeWidth="1.300" /></svg>
        </div>
      </div>
    </div>
  );
}

function MenuBar() {
  return (
    <div className="flex h-[24px] shrink-0 items-stretch bg-[#504c45] pl-[6px] text-[14px] leading-[25px] tracking-[0.1px] text-[#dfdbd2]">
      <div className="w-[57.5px] tracking-[0.2px]">Fichier</div>
      <div className="w-[60px] tracking-[0.35px]">Édition</div>
      <div className="w-[76px] tracking-[0.3px]">Affichage</div>
      <div className="w-[72.5px] tracking-[0.15px]">Insertion</div>
      <div className="w-[61.5px] tracking-[0.3px]">Format</div>
      <div className="w-[52.5px]">Styles</div>
      <div className="w-[56px]">Feuille</div>
      <div className="w-[69.5px] tracking-[-0.1px]">Données</div>
      <div className="w-[52.5px] tracking-[0.2px]">Outils</div>
      <div className="w-[63.5px] tracking-[0.15px]">Fenêtre</div>
      <div className="tracking-[0.5px]">Aide</div>
      <div className="ml-auto flex w-[36px] items-center justify-center bg-[#f2f1f0]">
        <svg width="7" height="7" viewBox="0 0 7 7"><path d="m.8.800 5.400 5.400m0-5.400L.8 6.200" stroke="#4a4a48" strokeWidth="1.200" /></svg>
      </div>
    </div>
  );
}

/* ---------- toolbars ---------- */

function StandardBar() {
  return (
    <div className="flex h-[38px] shrink-0 items-center">
      <Grip />
      <div className="w-[6px]" />
      <DropTool first><NewDoc /></DropTool>
      <DropTool><Folder /></DropTool>
      <DropTool><Save /></DropTool>
      <Sep />
      <Tool><Pdf /></Tool>
      <Tool><Printer /></Tool>
      <Tool><Preview /></Tool>
      <Sep />
      <Tool><Cut /></Tool>
      <Tool><Copy /></Tool>
      <DropTool><Paste /></DropTool>
      <Sep />
      <Tool><Brush /></Tool>
      <Tool><ClearFmt /></Tool>
      <Sep />
      <DropTool><Undo /></DropTool>
      <DropTool faded><Redo /></DropTool>
      <Sep />
      <Tool><Find /></Tool>
      <Tool><Spell /></Tool>
      <Sep />
      <DropTool><RowIcon /></DropTool>
      <DropTool><ColIcon /></DropTool>
      <Sep />
      <Tool><Sort /></Tool>
      <Tool><SortAsc /></Tool>
      <Tool><SortDesc /></Tool>
      <Tool><Filter /></Tool>
      <Sep />
      <Tool><Picture /></Tool>
      <Tool><Pie /></Tool>
      <Tool><Pivot /></Tool>
      <Sep />
      <Tool><Omega /></Tool>
      <Tool><Link /></Tool>
      <Tool><Note /></Tool>
      <Tool><HeaderFooter /></Tool>
      <Sep />
      <Tool><PrintArea /></Tool>
      <DropTool><Freeze /></DropTool>
      <Tool><Split /></Tool>
      <Sep />
      <Tool><Shapes /></Tool>
    </div>
  );
}

function ComboArrow() {
  return (
    <svg width="10" height="6" viewBox="0 0 10 6" className="block"><path d="M.3.300h9.400L5 5.300z" fill="#111" /></svg>
  );
}

function FormatBar() {
  return (
    <div className="flex h-[39px] shrink-0 items-center">
      <Grip />
      <div className="ml-[7px] flex h-[27px] w-[140px] items-stretch rounded-[4px] border border-[#a5a29d] bg-white text-[14px] text-[#4c4c4c]">
        <div className="flex w-[112px] items-center pb-px pl-[6px] tracking-[0.3px] whitespace-nowrap">Liberation San</div>
        <div className="flex flex-1 items-center justify-center rounded-r-[3px] border-l border-[#b8b5b0] bg-linear-to-b from-[#fdfdfd] to-[#eeedeb]"><ComboArrow /></div>
      </div>
      <div className="ml-[10px] flex h-[27px] w-[69px] items-stretch rounded-[4px] border border-[#a5a29d] bg-white text-[14px] text-[#4c4c4c]">
        <div className="flex w-[41px] items-center pb-px pl-[6px]">10</div>
        <div className="flex flex-1 items-center justify-center rounded-r-[3px] border-l border-[#b8b5b0] bg-linear-to-b from-[#fdfdfd] to-[#eeedeb]"><ComboArrow /></div>
      </div>
      <div className="w-px" />
      <Sep />
      <Tool><Letter /></Tool>
      <Tool><Letter italic /></Tool>
      <Tool><Letter underline /></Tool>
      <Sep />
      <DropTool><FontColor /></DropTool>
      <DropTool><Highlight /></DropTool>
      <Sep />
      <Tool><Align mode="l" /></Tool>
      <Tool><Align mode="c" /></Tool>
      <Tool><Align mode="r" /></Tool>
      <Sep />
      <Tool><Wrap /></Tool>
      <Tool><Merge /></Tool>
      <Sep />
      <Tool><VAlign y={6.500} /></Tool>
      <Tool><VAlign y={10.500} /></Tool>
      <Tool><VAlign y={13.500} /></Tool>
      <Sep />
      <DropTool><Currency /></DropTool>
      <Tool><Percent /></Tool>
      <Tool><NumberIcon /></Tool>
      <Tool><DateIcon /></Tool>
      <Sep />
      <Tool><AddDec /></Tool>
      <Tool><DelDec /></Tool>
      <Sep />
      <Tool><Indent /></Tool>
      <Tool><Indent back /></Tool>
      <Sep />
      <DropTool><Borders /></DropTool>
      <DropTool><BorderStyle /></DropTool>
      <DropTool><BorderColor /></DropTool>
      <Sep />
      <DropTool><CondFmt /></DropTool>
    </div>
  );
}

function FormulaBar() {
  return (
    <div className="flex h-[33px] shrink-0 items-center">
      <div className="ml-px flex h-[27px] w-[153px] items-stretch rounded-[4px] border border-[#a5a29d] bg-white text-[14px] text-[#4c4c4c]">
        <div className="flex w-[125px] items-center pl-[6px] tracking-[0.5px]">E8</div>
        <div className="flex flex-1 items-center justify-center rounded-r-[3px] border-l border-[#b8b5b0] bg-linear-to-b from-[#fdfdfd] to-[#eeedeb]"><ComboArrow /></div>
      </div>
      <div className="ml-[5px] h-[22px] w-px bg-[#d8d6d3]" />
      <div className="ml-[6px]"><FxIcon /></div>
      <svg width="14" height="18" viewBox="0 0 14 18" fill="none" className="ml-[9px] block">
        <path d="M12 5V2.200H2.500L8 9l-5.500 6.800H12.500V13" stroke="#4a4d4b" strokeWidth="2.200" />
      </svg>
      <div className="ml-[12px] flex flex-col gap-[2px]">
        <div className="h-[3px] w-[12px] border border-[#204a87] bg-[#729fcf]" />
        <div className="h-[3px] w-[12px] border border-[#204a87] bg-[#729fcf]" />
      </div>
      <div className="ml-[11px] h-[22px] w-px bg-[#d8d6d3]" />
      <div className="ml-[4px] h-[23px] w-[1209px] rounded-[4px] border border-[#a09d98] bg-white" />
      <div className="ml-[4px] flex h-[23px] w-[18px] items-center justify-center rounded-[4px] border border-[#b3b0ab] bg-linear-to-b from-white to-[#ededeb]">
        <svg width="10" height="6" viewBox="0 0 10 6"><path d="M0 0h10L5 5.500z" fill="#3c3c3a" /></svg>
      </div>
    </div>
  );
}

/* ---------- spreadsheet ---------- */

const rows: { n: number; h: string; c?: ReactNode; d?: ReactNode }[] = [
  { n: 1, h: "h-[23px]" },
  { n: 2, h: "h-[23px]" },
  { n: 3, h: "h-[23px]" },
  { n: 4, h: "h-[23px]" },
  { n: 5, h: "h-[105px]", c: "En tant que client je souhaite mettre un cours dans mon panier.", d: <>Le client peut mettre des cours de cirque dans son panier et consulter<br />les cours qu’il a choisi.</> },
  { n: 6, h: "h-[105px]", c: <>En tant que client je souhaite valider mon (mes) souhait(s) de<br />cours pour recevoir un devis.</>, d: "Le client peut valider ses choix de cours à partir de son panier." },
  { n: 7, h: "h-[105px]", c: <>En tant que cirque je souhaite avoir accès aux souhaits des<br />clients.</>, d: "Le cirque peut voir toutes les demandes de cours faites par les clients." },
  { n: 8, h: "h-[105px]", c: "En tant que cirque je souhaite proposer un prix pour le souhait.", d: <>Le cirque peut proposer un prix pour la prestation du cours en<br />accompagnant sa proposition d’un message.</> },
  { n: 9, h: "h-[52px]" },
  { n: 10, h: "h-[52px]" },
  { n: 11, h: "h-[23px]" },
];

function Sheet() {
  const head = "flex shrink-0 items-center justify-center border-r border-b border-[#979590]";
  const plainHead = "bg-[linear-gradient(#f7f7f6_52%,#f2f1f0_52%)]";
  return (
    <div className="relative flex w-[1479px] shrink-0 flex-col overflow-hidden bg-white">
      <div className="flex h-5 w-[1478px] shrink-0 text-[14px] text-[#4c4c4c]">
        <div className={`w-[41px] ${head} ${plainHead}`} />
        <div className={`w-[116px] ${head} ${plainHead}`}>B</div>
        <div className={`w-[565px] pl-px ${head} ${plainHead}`}>C</div>
        <div className={`w-[607px] ${head} ${plainHead}`}>D</div>
        <div className="flex w-[116px] shrink-0 items-center justify-center border-r border-b border-[#d0643c] bg-[linear-gradient(#f7a88b_52%,#f07746_52%)] pl-[2px] font-bold text-white">E</div>
        <div className={`flex-1 border-b border-[#979590] ${plainHead}`} />
      </div>
      {rows.map((r) => {
        const on = r.n === 8;
        const boxed = r.n >= 5 && r.n <= 8;
        const under = r.n >= 4 && r.n <= 8 ? "border-b-black" : "border-b-[#bfbfbf]";
        const side = boxed ? "border-r-black" : "border-r-[#bfbfbf]";
        const cell = `flex shrink-0 items-center border-r border-b pl-px font-[Liberation_Sans,Arial,sans-serif] text-[19px] leading-[21px] tracking-[0.15px] whitespace-nowrap text-black ${under} ${side}`;
        return (
          <div key={r.n} className={`flex shrink-0 ${r.h}`}>
            <div className={`flex w-[41px] shrink-0 items-center justify-center border-r border-b text-[14px] ${on ? "border-[#d0643c] bg-[linear-gradient(90deg,#f7a88b_49%,#f07746_49%)] font-bold text-white" : "border-[#979590] bg-[linear-gradient(90deg,#f7f7f6_49%,#f2f1f0_49%)] text-[#4c4c4c]"}`}>{r.n}</div>
            <div className={`w-[116px] shrink-0 border-r border-b border-b-[#bfbfbf] ${side}`} />
            <div className={`w-[565px] ${cell}`}><div>{r.c}</div></div>
            <div className={`w-[607px] ${cell}`}><div>{r.d}</div></div>
            <div className="relative w-[116px] shrink-0 border-r border-b border-[#bfbfbf]">
              {on && (
                <div className="absolute -top-px -right-px -bottom-px -left-px z-10 border-2 border-black">
                  <div className="absolute -right-[4px] -bottom-[4px] h-[5px] w-[5px] bg-black" />
                </div>
              )}
            </div>
            <div className="flex-1 border-b border-[#bfbfbf]" />
          </div>
        );
      })}
      <div className="flex flex-1">
        <div className="w-[41px] border-r border-[#979590] bg-[#f5f5f4]" />
        <div className="w-[116px] border-r border-[#bfbfbf]" />
        <div className="w-[565px] border-r border-[#bfbfbf]" />
        <div className="w-[607px] border-r border-[#bfbfbf]" />
        <div className="w-[116px] border-r border-[#bfbfbf]" />
      </div>
      <div className="absolute bottom-0 left-[700px] h-[15px] w-px bg-black" />
    </div>
  );
}

function SheetTabs() {
  return (
    <div className="flex h-[27px] shrink-0 flex-col">
      <div className="flex h-[7px] w-[1479px] justify-between pl-[135px]">
        <div className="h-[7px] w-[535px] bg-[#f2916a]" />
        <div className="flex h-[7px] w-[5px] justify-center bg-[#b3b1ad] py-px"><div className="w-px bg-black" /></div>
      </div>
      <div className="flex h-5 items-start">
        <svg width="70" height="14" viewBox="0 0 70 14" className="mt-[3px] ml-[12px] block">
          <path d="M1 1h1.500v10H1zM8.500 1v10L3 6zM27.500 1v10L21 6zM40 1v10l6.500-5zM59 1v10l5.500-5zM64.500 1H66v10h-1.500z" fill="#b5b3b0" />
        </svg>
        <svg width="12" height="12" viewBox="0 0 12 12" className="mt-[4px] ml-[14px] block"><path d="M4.200 0h3.600v4.200H12v3.600H7.800V12H4.200V7.800H0V4.200h4.200z" fill="#4a4a48" /></svg>
        <div className="ml-[10px] flex h-5 w-[71px] items-center justify-center border border-t-0 border-[#8f8d89] bg-white pr-px text-[12px] font-bold tracking-[-0.1px] text-[#4c4c4c]">Feuille1</div>
      </div>
    </div>
  );
}

function SideBar() {
  return (
    <div className="relative flex h-[721px] w-[47px] shrink-0 border-t border-b border-l border-[#a9a7a3]">
      <div className="w-[6px] border-r border-l border-r-[#a9a7a3] border-l-white bg-[#f5f5f4]" />
      <div className="flex flex-1 flex-col items-center">
        <svg width="10" height="10" viewBox="0 0 10 10" className="mt-[15px] block"><path d="M0 1h6.500M0 3.500h6.500M0 6h6.500" stroke="#33405c" strokeWidth="1.200" /><path d="M4 6h6L7 9.500z" fill="#16213a" /></svg>
        <div className="mt-[13px] h-px w-[22px] bg-[#dad8d5]" />
        <div className="mt-[3px] flex h-8 w-8 items-center justify-center rounded-[4px] border border-[#b9b7b3]">
          <Svg>
            <path d="M5 1.500 7.500 4v2.500H5L2 4.500C1 7.500 3 10 6 9.800L14.500 18c0 3 2 5 5 4.500L17.500 20.500v-2.500l2.500.2 2.200 2c1-3-1.200-5.200-4.200-5L9.800 7C10.200 4 8 1.500 5 1.500z" fill="#f6f6f5" stroke="#6f716e" strokeWidth="1.100" strokeLinejoin="round" />
          </Svg>
        </div>
        <div className="mt-[8px]">
          <Svg>
            <path d="M5 1h17v5h-2V4.500h-4V20h-5V4.500H7V6H5z" fill="#55585a" stroke="#3b3e3f" strokeWidth=".8" />
            <path d="M1.500 7v15.500H22z" fill="#6cc43f" stroke="#3e8f14" />
            <path d="M5 14.500v5h7z" fill="#e9f8df" stroke="#3e8f14" />
          </Svg>
        </div>
        <div className="mt-[10px]">
          <Svg>
            <path d="m8 5 4-4 4 4" stroke="#888" strokeWidth="1.300" />
            <path d="M1.500 5.500h21v14h-21z" fill="#c9872a" stroke="#7a4c08" strokeWidth="1.300" />
            <path d="M4 8h16v9.500H4z" fill="#7da2c4" /><path d="M4 13h16v4.500H4z" fill="#f0ad3c" />
            <circle cx="8" cy="15" r="2" fill="#fff0a0" />
            <path d="M14 17.500v-4l-3-3m3 3 4-4m-4 4V9" stroke="#2a1d10" />
          </Svg>
        </div>
        <div className="mt-[12px]">
          <Svg>
            <circle cx="12" cy="12" r="9.600" fill="#fafafa" stroke="#7c7e7b" strokeWidth="1.800" />
            <circle cx="12" cy="12" r="7.300" stroke="#c4c5c2" />
            <path d="m6.500 7 7 3.500-2.500 3z" fill="#e02a2a" /><path d="m17.500 17-7-3.500 3-3z" fill="#3a6fb8" />
          </Svg>
        </div>
        <div className="mt-[11px]"><FxIcon size={22} /></div>
      </div>
      <div className="absolute top-[323px] -left-px flex h-[73px] w-[7px] items-center bg-[#93918b]">
        <svg width="6" height="8" viewBox="0 0 6 8" className="ml-px"><path d="M0 0v8l5.500-4z" fill="#f2f1f0" /></svg>
      </div>
    </div>
  );
}

function StatusBar() {
  const v = "h-4 w-px shrink-0 bg-[#8f8d89]";
  return (
    <div className="flex h-[21px] shrink-0 items-center border-t border-[#a9a7a3] text-[12px] tracking-[-0.2px] whitespace-nowrap text-[#4c4c4c]">
      <div className="w-[204px] pl-[10px]">Feuille 1 sur 1</div>
      <div className={v} />
      <div className="w-[332px]" />
      <div className={v} />
      <div className="w-[184px] pl-2 tracking-[-0.1px]">Par défaut</div>
      <div className={v} />
      <div className="w-[218px] pl-px text-center">Français (France)</div>
      <div className={v} />
      <div className="w-[67px]" />
      <div className={v} />
      <div className="flex w-[28px] justify-center">
        <svg width="13" height="12" viewBox="0 0 13 12"><path d="M0 3h9v6H0z" fill="#93918d" /><path d="M9 .5h3M9 11h3M10.500 1v10" stroke="#777" fill="none" /></svg>
      </div>
      <div className={v} />
      <div className="flex w-[28px] justify-center pl-[3px]">
        <svg width="12" height="12" viewBox="0 0 12 12" fill="none"><path d="M9.500 3V.8H1v10h8.500V9" stroke="#8f8d89" /><path d="M8.500 3.500v5M6 4.700l5 2.600M11 4.700 6 7.300" stroke="#c01c28" strokeWidth="1.300" /></svg>
      </div>
      <div className={v} />
      <div className="w-[28px]" />
      <div className={v} />
      <div className="w-[241px] pl-[3px] text-center tracking-[-0.28px]">Moyenne: ; Somme: 0</div>
      <div className={v} />
      <div className="flex w-[142px] items-center">
        <div className="ml-[10px] h-[2px] w-2 bg-[#93918d]" />
        <svg width="97" height="12" viewBox="0 0 97 12" className="ml-[6px] block">
          <path d="M0 6h97" stroke="#b3b1ad" strokeWidth="1.600" />
          <path d="M48 1v10" stroke="#b3b1ad" strokeWidth="1.600" />
          <circle cx="54" cy="6" r="3.800" fill="#fff" stroke="#8f8d89" />
        </svg>
        <svg width="8" height="8" viewBox="0 0 8 8" className="ml-[6px] block"><path d="M3 0h2v3h3v2H5v3H3V5H0V3h3z" fill="#93918d" /></svg>
      </div>
      <div className={v} />
      <div className="pl-2">140 %</div>
    </div>
  );
}

export default function App() {
  return (
    <div className="flex h-[900px] w-[1600px] flex-col overflow-hidden bg-[#f2f1f0] font-['Noto_Sans',sans-serif]">
      <TopBar />
      <div className="flex min-h-0 flex-1">
        <Dock />
        <div className="flex w-[1533px] flex-col">
          <TitleBar />
          <MenuBar />
          <StandardBar />
          <FormatBar />
          <div className="h-px shrink-0" />
          <div className="flex h-[722px] shrink-0">
            <div className="flex w-[1486px] shrink-0 flex-col">
              <FormulaBar />
              <div className="flex h-[662px] shrink-0 border-t border-[#a9a7a3]">
                <Sheet />
                <div className="flex w-[7px] flex-col">
                  <div className="flex h-[7px] items-center bg-[#b3b1ad] px-px"><div className="h-px w-[5px] bg-black" /></div>
                  <div className="h-[299px] bg-[#f2916a]" />
                </div>
              </div>
              <SheetTabs />
            </div>
            <SideBar />
          </div>
          <StatusBar />
        </div>
      </div>
    </div>
  );
}
